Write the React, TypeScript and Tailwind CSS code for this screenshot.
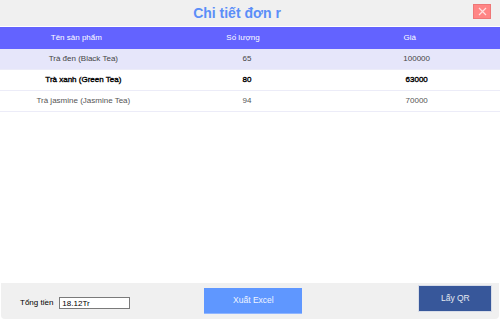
const rows = [
  { name: 'Trà đen (Black Tea)', qty: 65, price: 100000, tone: 'bg-[#e6e6fa] text-[#444]' },
  { name: 'Trà xanh (Green Tea)', qty: 80, price: 63000, tone: 'bg-white text-black [-webkit-text-stroke:0.35px_#000]' },
  { name: 'Trà jasmine (Jasmine Tea)', qty: 94, price: 70000, tone: 'bg-white text-[#555]' },
];

export default function App() {
  return (
    <div
      className="flex h-[321px] w-[500px] flex-col bg-white"
      style={{ fontFamily: '"Liberation Sans", Arial, sans-serif' }}
    >
      {/* title bar */}
      <div className="relative flex h-[27px] items-center justify-center border-b border-white bg-[#f0f0f0] pr-[26px]">
        <h1 className="text-[14px] font-bold leading-none text-[#5b8ef8]">Chi tiết đơn r</h1>
        <button className="absolute left-[473px] top-[4px] flex h-[15px] w-[18px] items-center justify-center border border-[#e77] bg-[#ff8585]">
          <svg width="9" height="9" viewBox="0 0 9 9">
            <path d="M1 1 L8 8 M8 1 L1 8" stroke="#ffe0e0" strokeWidth="1.2" />
          </svg>
        </button>
      </div>

      {/* table */}
      <div className="text-[8px]">
        <div className="grid h-[22px] grid-cols-3 items-center bg-[#6363ff] text-white">
          <div className="pr-[14px] text-center">Tên sản phẩm</div>
          <div className="pr-[14px] text-center">Số lượng</div>
          <div className="pr-[14px] text-center">Giá</div>
        </div>
        {rows.map((r) => (
          <div
            key={r.name}
            className={`grid h-[21px] grid-cols-3 items-center border-b border-[#ececf8] ${r.tone}`}
          >
            <div className="text-center">{r.name}</div>
            <div className="pr-[6px] text-center">{r.qty}</div>
            <div className="text-center">{r.price}</div>
          </div>
        ))}
      </div>

      <div className="flex-1" />

      {/* footer */}
      <div className="mx-[1px] mb-[2px] flex h-[36px] items-start rounded-b-[4px] bg-[#f0f0f0] pl-[19px] text-[8px]">
        <span className="mt-[14px] leading-[12px] text-black">Tổng tiền</span>
        <input
          readOnly
          value="18.12Tr"
          className="ml-[6px] mt-[14px] h-[12px] w-[71px] border border-[#7a7a7a] bg-white px-[2px] text-[8px] leading-none text-black outline-none"
        />
        <button className="ml-[74px] mt-[5px] h-[26px] w-[98px] border-b border-[#8fb5ff] bg-[#5f97ff] text-[8.5px] text-[#eef4ff]">
          Xuất Excel
        </button>
        <button className="ml-[116px] mt-[2px] h-[27px] w-[74px] border border-[#d8dde8] bg-[#37579a] text-[8.5px] text-[#e4e8f0]">
          Lấy QR
        </button>
      </div>
    </div>
  );
}
